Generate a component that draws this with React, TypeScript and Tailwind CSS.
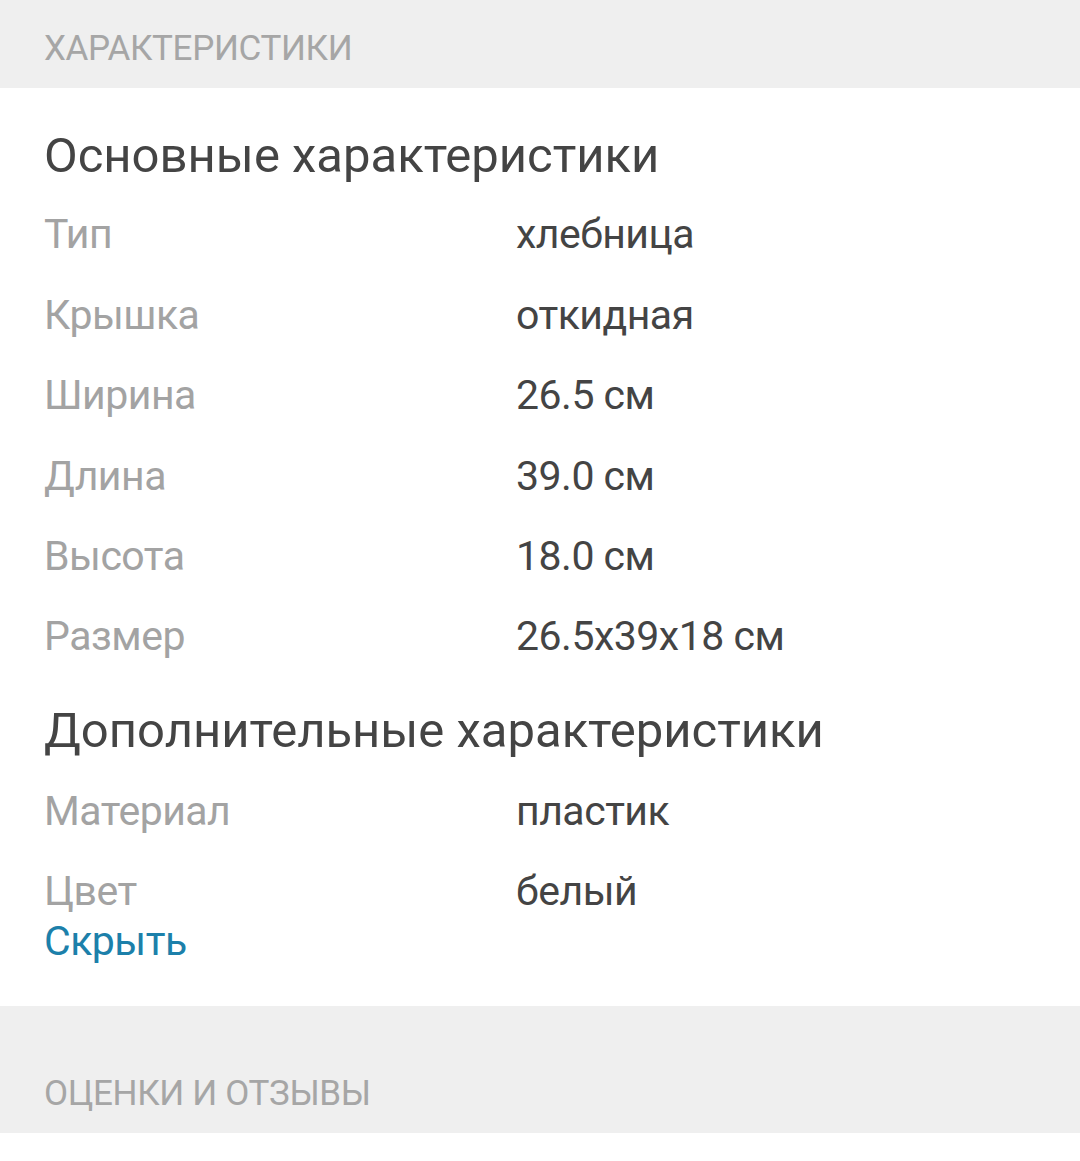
import React from 'react';

interface SpecRow {
    label: string;
    value: string;
}

interface SpecGroup {
    title: string;
    rows: SpecRow[];
}

const groups: SpecGroup[] = [
    {
        title: 'Основные характеристики',
        rows: [
            { label: 'Тип', value: 'хлебница' },
            { label: 'Крышка', value: 'откидная' },
            { label: 'Ширина', value: '26.5 см' },
            { label: 'Длина', value: '39.0 см' },
            { label: 'Высота', value: '18.0 см' },
            { label: 'Размер', value: '26.5х39х18 см' },
        ],
    },
    {
        title: 'Дополнительные характеристики',
        rows: [
            { label: 'Материал', value: 'пластик' },
            { label: 'Цвет', value: 'белый' },
        ],
    },
];

function SectionHeader({ title, className }: { title: string; className: string }) {
    return (
        <div className={`bg-[#efefef] pl-[44px] text-[35px] leading-[42px] tracking-[-0.35px] text-[#a6a6a6] ${className}`}>
            {title}
        </div>
    );
}

export default function App() {
    return (
        <div className="min-h-[1161px] bg-white font-['Roboto','Noto_Sans',sans-serif]">
            <SectionHeader title="ХАРАКТЕРИСТИКИ" className="h-[88px] pt-[28px]" />

            <div className="px-[44px] pt-[43px] pb-[40px]">
                {groups.map((group, i) => (
                    <div key={group.title} className={i > 0 ? 'pt-[45px]' : ''}>
                        {/* Group title */}
                        <h2 className={`text-[49px] leading-[50px] text-[#444444] ${i > 0 ? '-mb-[1px]' : '-mb-[2px]'}`}>
                            {group.title}
                        </h2>
                        {group.rows.map((row) => (
                            <div key={row.label} className="flex pt-[30.4px] text-[41px] leading-[50px] tracking-[-0.5px]">
                                <span className="w-[472px] shrink-0 text-[#a3a3a3]">{row.label}</span>
                                <span className="text-[#444444]">{row.value}</span>
                            </div>
                        ))}
                    </div>
                ))}
                <button className="block text-[41px] leading-[50px] tracking-[-0.5px] text-[#1c80aa]">Скрыть</button>
            </div>

            <SectionHeader title="ОЦЕНКИ И ОТЗЫВЫ" className="h-[127px] pt-[67px]" />
        </div>
    );
}
